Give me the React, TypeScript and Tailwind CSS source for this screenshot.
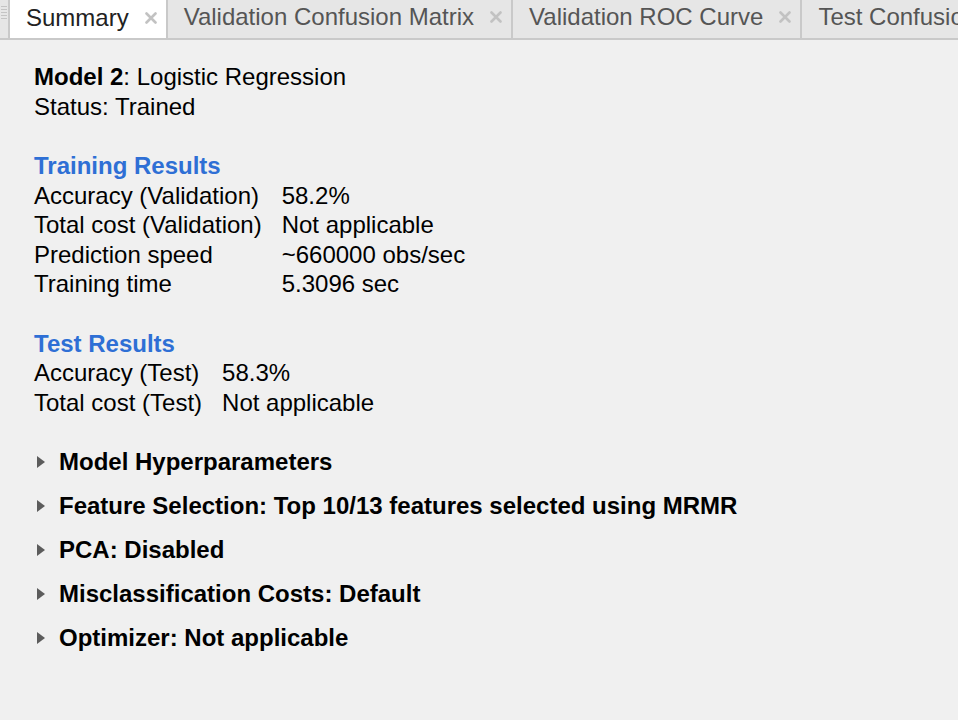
const tabs = [
  { name: "Summary", active: true },
  { name: "Validation Confusion Matrix", active: false },
  { name: "Validation ROC Curve", active: false },
  { name: "Test Confusion Matrix", active: false },
];

const trainingRows = [
  ["Accuracy (Validation)", "58.2%"],
  ["Total cost (Validation)", "Not applicable"],
  ["Prediction speed", "~660000 obs/sec"],
  ["Training time", "5.3096 sec"],
];

const testRows = [
  ["Accuracy (Test)", "58.3%"],
  ["Total cost (Test)", "Not applicable"],
];

const sections = [
  "Model Hyperparameters",
  "Feature Selection: Top 10/13 features selected using MRMR",
  "PCA: Disabled",
  "Misclassification Costs: Default",
  "Optimizer: Not applicable",
];

function CloseIcon() {
  return (
    <svg width="12" height="12" viewBox="0 0 12 12" className="ml-[16px] shrink-0">
      <path d="M1.5 1.5 L10.5 10.5 M10.5 1.5 L1.5 10.5" stroke="#c2c2c2" strokeWidth="2.6" strokeLinecap="round" />
    </svg>
  );
}

function ResultTable({ rows }: { rows: string[][] }) {
  return (
    <div className="grid grid-cols-[max-content_max-content] gap-x-5">
      {rows.map(([label, value]) => (
        <div key={label} className="contents">
          <span className="leading-[29.5px]">{label}</span>
          <span className="leading-[29.5px]">{value}</span>
        </div>
      ))}
    </div>
  );
}

export default function App() {
  return (
    <div
      className="w-[958px] h-[720px] overflow-hidden bg-[#f0f0f0] text-black"
      style={{ fontFamily: '"Liberation Sans", Arial, sans-serif' }}
    >
      {/* Tab strip */}
      <div className="flex h-[40px] bg-[#e6e6e6] border-b-2 border-[#c9c9c9] whitespace-nowrap overflow-hidden">
        <div className="w-[10px] shrink-0 flex flex-col gap-[2px] pt-[6px] pl-[1px] border-r-2 border-[#c9c9c9]">
          {Array.from({ length: 5 }).map((_, i) => (
            <div key={i} className="h-[1px] w-[6px] bg-[#c4c4c4]" />
          ))}
        </div>
        {tabs.map((tab) => (
          <div
            key={tab.name}
            className={`flex items-center shrink-0 pl-[16px] pr-[9px] pb-[5px] border-r-2 border-[#c9c9c9] ${
              tab.active ? "bg-white text-[#222] -mb-[2px] h-[40px]" : "text-[#555]"
            }`}
          >
            <span className="text-[24px] leading-none">{tab.name}</span>
            <CloseIcon />
          </div>
        ))}
      </div>

      {/* Summary content */}
      <div className="pl-[34px] pt-[22px] text-[24px]">
        <div className="leading-[29.5px]">
          <span className="font-bold">Model 2</span>: Logistic Regression
        </div>
        <div className="leading-[29.5px]">Status: Trained</div>

        <div className="mt-[30px] font-bold text-[#2e6fd5] leading-[29.5px]">Training Results</div>
        <ResultTable rows={trainingRows} />

        <div className="mt-[30px] font-bold text-[#2e6fd5] leading-[29.5px]">Test Results</div>
        <ResultTable rows={testRows} />

        <div className="mt-[23px] flex flex-col">
          {sections.map((s) => (
            <div key={s} className="flex items-center h-[44px]">
              <svg width="10" height="14" viewBox="0 0 10 14" className="ml-[2px] mr-[13px] shrink-0">
                <path d="M1 1 L9 7 L1 13 Z" fill="#5c5c5c" />
              </svg>
              <span className="font-bold">{s}</span>
            </div>
          ))}
        </div>
      </div>
    </div>
  );
}
